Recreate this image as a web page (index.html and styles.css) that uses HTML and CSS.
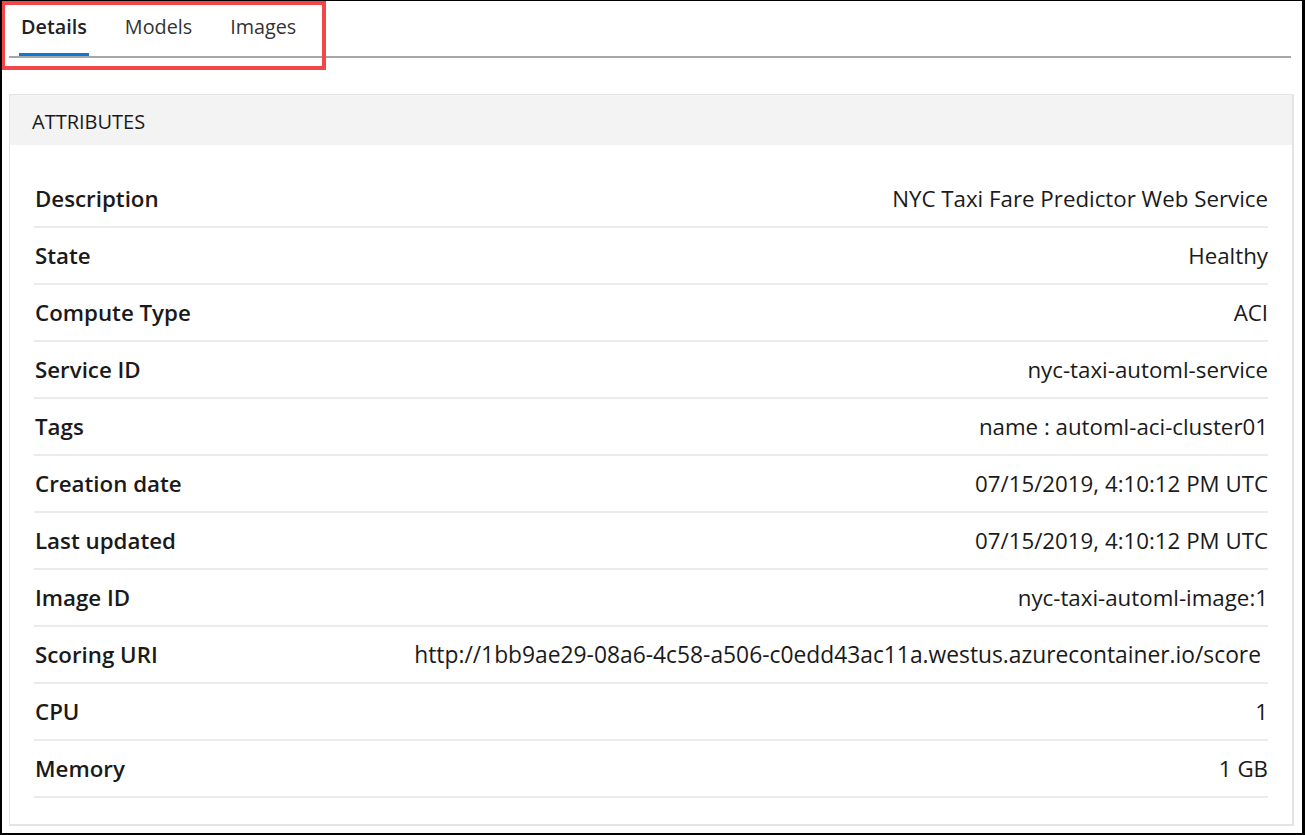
FILE: index.html
```html
<!DOCTYPE html>
<html lang="en">
<head>
<meta charset="utf-8">
<title>Service details</title>
<link rel="stylesheet" href="styles.css">
</head>
<body>
<div class="frame">
  <nav class="tabs">
    <div class="tab active">Details</div>
    <div class="tab">Models</div>
    <div class="tab">Images</div>
  </nav>
  <div class="highlight"></div>
  <section class="panel">
    <header class="panel-head">ATTRIBUTES</header>
    <div class="panel-body">
      <div class="row"><span class="label">Description</span><span class="value">NYC Taxi Fare Predictor Web Service</span></div>
      <div class="row"><span class="label">State</span><span class="value">Healthy</span></div>
      <div class="row"><span class="label">Compute Type</span><span class="value">ACI</span></div>
      <div class="row"><span class="label">Service ID</span><span class="value">nyc-taxi-automl-service</span></div>
      <div class="row"><span class="label">Tags</span><span class="value">name : automl-aci-cluster01</span></div>
      <div class="row"><span class="label">Creation date</span><span class="value">07/15/2019, 4:10:12 PM UTC</span></div>
      <div class="row"><span class="label">Last updated</span><span class="value">07/15/2019, 4:10:12 PM UTC</span></div>
      <div class="row"><span class="label">Image ID</span><span class="value">nyc-taxi-automl-image:1</span></div>
      <div class="row"><span class="label">Scoring URI</span><span class="value uri">http://1bb9ae29-08a6-4c58-a506-c0edd43ac11a.westus.azurecontainer.io/score</span></div>
      <div class="row"><span class="label">CPU</span><span class="value">1</span></div>
      <div class="row"><span class="label">Memory</span><span class="value">1 GB</span></div>
    </div>
  </section>
</div>
</body>
</html>
```

FILE: styles.css
```css
html, body {
  margin: 0;
  padding: 0;
  background: #fff;
}

body {
  font-family: "Open Sans", "Noto Sans", "Liberation Sans", sans-serif;
  color: #1a1a1a;
}

.frame {
  position: relative;
  box-sizing: border-box;
  width: 1305px;
  height: 835px;
  border-style: solid;
  border-color: #000;
  border-width: 1px 3px 2px 2px;
  overflow: hidden;
}

.tabs {
  display: flex;
  align-items: stretch;
  gap: 34px;
  margin: 0 11px 0 7px;
  padding-left: 10px;
  border-bottom: 2px solid #a6a6a6;
  height: 57px;
  box-sizing: border-box;
}

.tab {
  display: flex;
  align-items: center;
  padding: 0 2px 1px;
  font-size: 19.8px;
  color: #333;
  border-bottom: 3px solid transparent;
}

.tab.active {
  font-weight: 600;
  color: #222;
  border-bottom-color: #0f78d4;
}

.highlight {
  position: absolute;
  left: -1px;
  top: 0;
  width: 325px;
  height: 69px;
  box-sizing: border-box;
  border: 4px solid #f2474a;
}

.panel {
  margin: 36px 8px 0 7px;
  border: 1px solid #e4e4e4;
  border-width: 1px 2px 2px 1px;
}

.panel-head {
  height: 50px;
  display: flex;
  align-items: center;
  padding: 2px 0 0 22px;
  box-sizing: border-box;
  background: #f3f3f3;
  font-size: 20px;
  color: #1a1a1a;
}

.panel-body {
  padding: 26px 24px 26px 24px;
}

.row {
  display: flex;
  justify-content: space-between;
  align-items: center;
  height: 55px;
  border-bottom: 2px solid #ebebeb;
  font-size: 22.3px;
}

.label {
  font-weight: 600;
  color: #1a1a1a;
  padding-left: 1px;
}

.value {
  color: #1a1a1a;
}

.value.uri {
  margin-right: 7px;
  font-size: 22.8px;
}
```
